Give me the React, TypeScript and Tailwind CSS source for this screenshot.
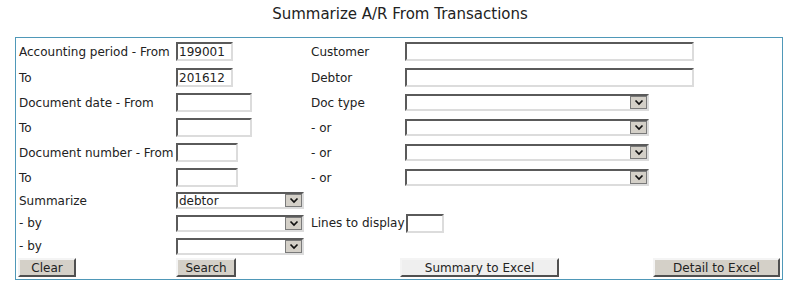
const inset =
  'border-2 border-t-[#5a5a5a] border-l-[#5a5a5a] border-r-[#dcdcdc] border-b-[#dcdcdc] bg-white'

function TextBox({ w, value = '' }: { w: string; value?: string }) {
  return (
    <div className={`${w} h-[19px] ${inset} flex items-center pl-[1px] text-[12px] leading-none`}>
      {value}
    </div>
  )
}

function Chevron() {
  return (
    <svg width="10" height="7" viewBox="0 0 10 7">
      <polyline points="1.5,1.5 5,5 8.5,1.5" fill="none" stroke="#111" strokeWidth="1.7" />
    </svg>
  )
}

function Dropdown({ w, value = '' }: { w: string; value?: string }) {
  return (
    <div className={`${w} h-[17px] ${inset} flex items-stretch text-[12px] leading-none`}>
      <span className="flex-1 pl-[1px] flex items-center">{value}</span>
      <span className="w-[17px] bg-[#d4d0c8] border border-[#7a7a7a] flex items-center justify-center">
        <Chevron />
      </span>
    </div>
  )
}

function Btn({ label, className }: { label: string; className: string }) {
  return (
    <button
      className={`h-[19px] border-2 border-t-[#f4f4f4] border-l-[#f4f4f4] border-r-[#505050] border-b-[#505050] text-[12px] leading-none text-[#222] ${className}`}
    >
      {label}
    </button>
  )
}

const Label = ({ text }: { text: string }) => (
  <div className="pl-[3px] text-[12px] whitespace-nowrap">{text}</div>
)

export default function App() {
  return (
    <div className="w-[800px] h-[293px] bg-white text-[#222] font-['DejaVu_Sans',Verdana,sans-serif]">
      <h1 className="h-[37px] pt-[3px] text-center text-[15px] text-[#222]">
        Summarize A/R From Transactions
      </h1>
      <div className="ml-[15px] w-[768px] h-[243px] border border-[#4f98b8] flex flex-col">
        <div className="grid grid-cols-[160px_135px_94px_1fr] grid-rows-[27px_25px_25px_25px_25px_25px_21px_24px_22px] items-center">
          <Label text="Accounting period - From" />
          <TextBox w="w-[57px]" value="199001" />
          <div className="text-[12px]">Customer</div>
          <TextBox w="w-[289px]" />

          <Label text="To" />
          <TextBox w="w-[57px]" value="201612" />
          <div className="text-[12px]">Debtor</div>
          <TextBox w="w-[289px]" />

          <Label text="Document date - From" />
          <TextBox w="w-[76px]" />
          <div className="text-[12px]">Doc type</div>
          <Dropdown w="w-[244px]" />

          <Label text="To" />
          <TextBox w="w-[76px]" />
          <div className="text-[12px]">- or</div>
          <Dropdown w="w-[244px]" />

          <Label text="Document number - From" />
          <TextBox w="w-[62px]" />
          <div className="text-[12px]">- or</div>
          <Dropdown w="w-[244px]" />

          <Label text="To" />
          <TextBox w="w-[62px]" />
          <div className="text-[12px]">- or</div>
          <Dropdown w="w-[244px]" />

          <Label text="Summarize" />
          <Dropdown w="w-[128px]" value="debtor" />
          <div />
          <div />

          <Label text="- by" />
          <Dropdown w="w-[128px]" />
          <div className="text-[12px] whitespace-nowrap">Lines to display</div>
          <TextBox w="w-[38px] ml-[1px]" />

          <Label text="- by" />
          <Dropdown w="w-[128px]" />
          <div />
          <div />
        </div>
        <div className="flex items-center h-[21px]">
          <Btn label="Clear" className="ml-[2px] w-[58px] bg-[#d4d0c8]" />
          <Btn label="Search" className="ml-[100px] w-[60px] bg-[#d4d0c8]" />
          <Btn label="Summary to Excel" className="ml-[164px] w-[159px] bg-[#efefef]" />
          <Btn label="Detail to Excel" className="ml-auto mr-[2px] w-[127px] bg-[#d4d0c8]" />
        </div>
      </div>
    </div>
  )
}
